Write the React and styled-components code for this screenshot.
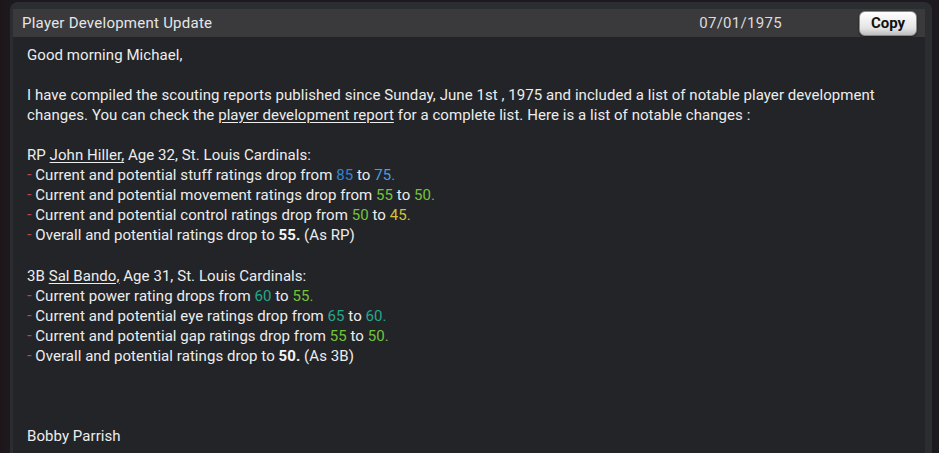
import styled, { createGlobalStyle } from "styled-components";

const GlobalStyle = createGlobalStyle`
  html, body {
    margin: 0;
    padding: 0;
    background: #1b1a1e;
    font-family: Roboto, "Liberation Sans", sans-serif;
  }
`;

const Page = styled.div`
  display: flex;
  width: 939px;
  height: 453px;
  overflow: hidden;
  background: linear-gradient(90deg, #1e1619 0px, #1c1a1e 10px);
`;

const Panel = styled.div`
  margin: 2px 0 0 10px;
  width: 922px;
  display: flex;
  flex-direction: column;
  background: #2c2d31;
  border-radius: 8px 8px 0 0;
  padding: 7px 7px 0 3px;
  box-sizing: border-box;
`;

const Header = styled.div`
  display: flex;
  align-items: center;
  height: 28px;
  background: #3a3a3d;
  padding: 0 8px 0 9px;
`;

const Title = styled.div`
  flex: 1;
  color: #e6e6e6;
  font-size: 15px;
  letter-spacing: 0.25px;
`;

const DateText = styled.div`
  color: #dcdcdc;
  font-size: 15px;
  letter-spacing: 0.3px;
  margin-right: 77px;
`;

const CopyButton = styled.button`
  width: 58px;
  height: 25px;
  border-radius: 6px;
  border: 1px solid #888;
  background: linear-gradient(#ffffff, #e4e4e4 70%, #bdbdbd);
  color: #111;
  font-family: Roboto, "Liberation Sans", sans-serif;
  font-weight: bold;
  font-size: 15px;
  padding: 0;
  box-shadow: 0 1px 2px rgba(0, 0, 0, 0.6);
`;

const Body = styled.div`
  flex: 1;
  background: #232428;
  padding: 8px 14px 0 14px;
  color: #ededed;
  font-size: 15px;
  letter-spacing: 0.06px;
  line-height: 20.05px;
`;

const Line = styled.div`
  min-height: 20.05px;
`;

const Link = styled.span`
  text-decoration: underline;
  text-underline-offset: 2px;
`;

const Dash = styled.span`
  color: #b5474a;
  font-size: 16px;
`;

const Num = styled.span`
  color: ${(p) => p.$c};
`;

const Bold = styled.b`
  font-weight: bold;
  color: #f4f4f4;
`;

const C = {
  blue: "#2f86d0",
  lightBlue: "#4a9fdc",
  green: "#72c43a",
  yellow: "#d2c13a",
  teal: "#24a88c",
};

const Item = ({ children }) => (
  <Line>
    <Dash>-</Dash> {children}
  </Line>
);

export default function App() {
  return (
    <Page>
      <GlobalStyle />
      <Panel>
        <Header>
          <Title>Player Development Update</Title>
          <DateText>07/01/1975</DateText>
          <CopyButton>Copy</CopyButton>
        </Header>
        <Body>
          <Line>Good morning Michael,</Line>
          <Line />
          <Line>
            I have compiled the scouting reports published since Sunday, June 1st , 1975 and
            included a list of notable player development changes. You can check the{" "}
            <Link>player development report</Link> for a complete list. Here is a list of notable
            changes :
          </Line>
          <Line />
          <Line>
            RP <Link>John Hiller,</Link> Age 32, St. Louis Cardinals:
          </Line>
          <Item>
            Current and potential stuff ratings drop from <Num $c={C.blue}>85</Num> to{" "}
            <Num $c={C.lightBlue}>75.</Num>
          </Item>
          <Item>
            Current and potential movement ratings drop from <Num $c={C.green}>55</Num> to{" "}
            <Num $c={C.green}>50.</Num>
          </Item>
          <Item>
            Current and potential control ratings drop from <Num $c={C.green}>50</Num> to{" "}
            <Num $c={C.yellow}>45.</Num>
          </Item>
          <Item>
            Overall and potential ratings drop to <Bold>55.</Bold> (As RP)
          </Item>
          <Line />
          <Line>
            3B <Link>Sal Bando,</Link> Age 31, St. Louis Cardinals:
          </Line>
          <Item>
            Current power rating drops from <Num $c={C.teal}>60</Num> to{" "}
            <Num $c={C.green}>55.</Num>
          </Item>
          <Item>
            Current and potential eye ratings drop from <Num $c={C.teal}>65</Num> to{" "}
            <Num $c={C.teal}>60.</Num>
          </Item>
          <Item>
            Current and potential gap ratings drop from <Num $c={C.green}>55</Num> to{" "}
            <Num $c={C.green}>50.</Num>
          </Item>
          <Item>
            Overall and potential ratings drop to <Bold>50.</Bold> (As 3B)
          </Item>
          <Line />
          <Line />
          <Line />
          <Line>Bobby Parrish</Line>
        </Body>
      </Panel>
    </Page>
  );
}
